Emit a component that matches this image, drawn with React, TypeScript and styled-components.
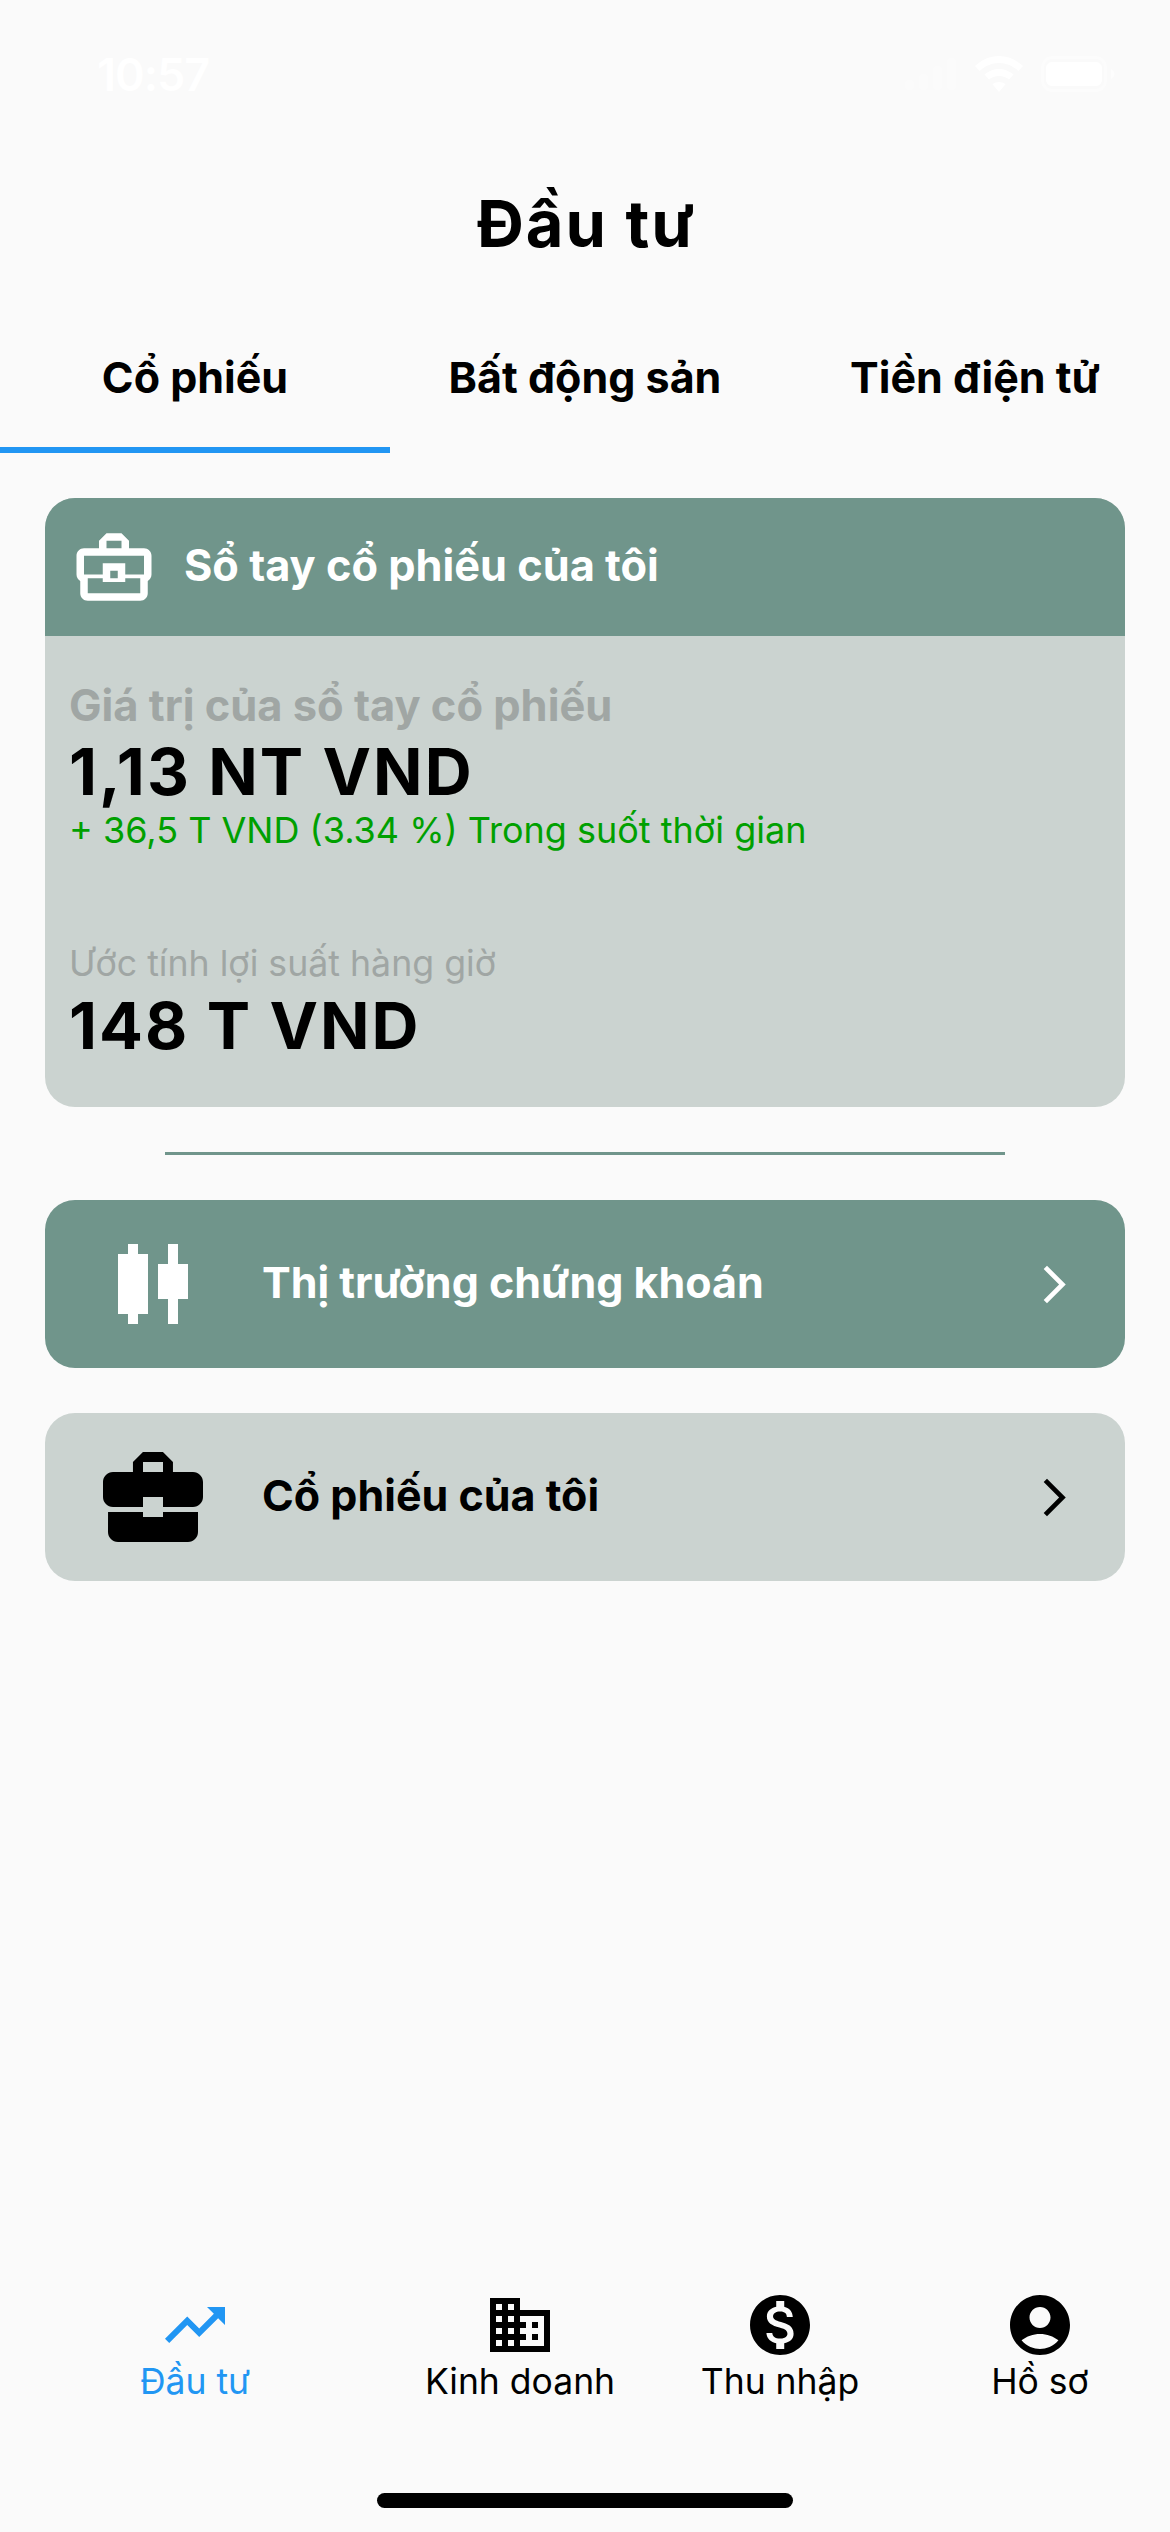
import React from "react";
import styled, { createGlobalStyle } from "styled-components";

const GlobalStyle = createGlobalStyle`
  html, body { margin: 0; padding: 0; background: #fafafa; }
  * { box-sizing: border-box; }
  body { font-family: Inter, "Liberation Sans", sans-serif; color: #000; }
`;

const Page = styled.div`
  position: relative;
  width: 1170px;
  height: 2532px;
  display: flex;
  flex-direction: column;
  background: #fafafa;
  overflow: hidden;
`;

const StatusBar = styled.div`
  height: 188px;
  padding: 48px 55px 0 97px;
  display: flex;
  justify-content: space-between;
  align-items: flex-start;
  color: #fff;
`;

const Clock = styled.span`
  font-size: 45px;
  line-height: 54px;
  font-weight: 600;
  letter-spacing: -1px;
`;

const StatusIcons = styled.div`
  display: flex;
  align-items: flex-end;
  gap: 18px;
  padding-top: 8px;
`;

const Title = styled.h1`
  margin: 0;
  height: 127px;
  padding-left: 3px;
  font-size: 65px;
  line-height: 72px;
  font-weight: 700;
  letter-spacing: 2px;
  text-align: center;
`;

const Tabs = styled.div`
  display: grid;
  grid-template-columns: repeat(3, 390px);
  height: 138px;
`;

const Tab = styled.div<{ $active?: boolean }>`
  padding-top: 32px;
  font-size: 43px;
  line-height: 60px;
  font-weight: 700;
  text-align: center;
  border-bottom: 6px solid ${(p) => (p.$active ? "#2196f3" : "transparent")};
`;

const Content = styled.main`
  padding: 45px 45px 0;
  display: flex;
  flex-direction: column;
`;

const Card = styled.section`
  height: 609px;
  border-radius: 30px;
  background: #cbd3d0;
  overflow: hidden;
`;

const CardHeader = styled.header`
  height: 138px;
  padding-left: 24px;
  display: flex;
  align-items: center;
  gap: 25px;
  background: #70958b;
  color: #fff;
  font-size: 43.300px;
  font-weight: 700;
`;

const HeaderLabel = styled.span`
  margin-bottom: 4px;
`;

const CardBody = styled.div`
  padding: 43px 24px 0;
  display: flex;
  flex-direction: column;
`;

const MutedBold = styled.div`
  font-size: 43.400px;
  line-height: 52px;
  font-weight: 700;
  color: #a0a6a4;
`;

const Amount = styled.div`
  margin: 3px 0 -3px;
  font-size: 65px;
  line-height: 76px;
  font-weight: 700;
  letter-spacing: 2px;
`;

const Gain = styled.div`
  font-size: 36px;
  line-height: 46px;
  color: #00a000;
`;

const MutedPlain = styled.div`
  margin-top: 88px;
  font-size: 35.700px;
  line-height: 44px;
  color: #a0a6a4;
`;

const Divider = styled.hr`
  width: 840px;
  height: 3px;
  margin: 45px auto;
  border: 0;
  background: #70958b;
`;

const LinkRow = styled.div<{ $primary?: boolean }>`
  height: 168px;
  margin-bottom: 45px;
  padding: 0 48px;
  display: flex;
  align-items: center;
  gap: 49px;
  border-radius: 30px;
  background: ${(p) => (p.$primary ? "#70958b" : "#cbd3d0")};
  color: ${(p) => (p.$primary ? "#fff" : "#000")};
  font-size: 43px;
  font-weight: 700;
`;

const LinkText = styled.span`
  flex: 1;
  margin-bottom: 4px;
`;

const BottomNav = styled.nav`
  margin-top: auto;
  display: grid;
  grid-template-columns: 390px repeat(3, 260px);
  padding-bottom: 129px;
`;

const NavItem = styled.div<{ $active?: boolean }>`
  display: flex;
  flex-direction: column;
  align-items: center;
  color: ${(p) => (p.$active ? "#2196f3" : "#000")};
  font-size: 35.500px;
  line-height: 42px;
`;

const HomeIndicator = styled.div`
  position: absolute;
  left: 377px;
  top: 2493px;
  width: 416px;
  height: 15px;
  border-radius: 8px;
  background: #000;
`;

const Icon = ({ d, size }: { d: string; size: number }) => (
  <svg width={size} height={size} viewBox="0 0 24 24" fill="currentColor" style={{ flex: "none" }}>
    <path d={d} />
  </svg>
);

const ICONS = {
  trending:
    "M16 6l2.29 2.29-4.88 4.88-4-4L2 16.59 3.41 18l6-6 4 4 6.3-6.29L22 12V6z",
  business:
    "M12 7V3H2v18h20V7H12zM6 19H4v-2h2v2zm0-4H4v-2h2v2zm0-4H4V9h2v2zm0-4H4V5h2v2zm4 12H8v-2h2v2zm0-4H8v-2h2v2zm0-4H8V9h2v2zm0-4H8V5h2v2zm10 12h-8v-2h2v-2h-2v-2h2v-2h-2V9h8v10zm-2-8h-2v2h2v-2zm0 4h-2v2h2v-2z",
  money:
    "M12 2C6.48 2 2 6.48 2 12s4.48 10 10 10 10-4.48 10-10S17.52 2 12 2zm1.41 16.09V20h-2.67v-1.93c-1.71-.36-3.16-1.46-3.27-3.4h1.96c.1 1.05.82 1.87 2.65 1.87 1.96 0 2.4-.98 2.4-1.59 0-.83-.44-1.61-2.67-2.14-2.48-.6-4.18-1.62-4.18-3.67 0-1.72 1.39-2.84 3.11-3.21V4h2.67v1.95c1.86.45 2.79 1.86 2.85 3.39H14.3c-.05-1.11-.64-1.87-2.22-1.87-1.5 0-2.4.68-2.4 1.64 0 .84.65 1.39 2.67 1.91s4.18 1.39 4.18 3.91c-.01 1.83-1.38 2.83-3.12 3.16z",
  account:
    "M12 2C6.48 2 2 6.48 2 12s4.48 10 10 10 10-4.48 10-10S17.52 2 12 2zm0 4c1.93 0 3.5 1.57 3.5 3.5S13.93 13 12 13s-3.5-1.57-3.5-3.5S10.07 6 12 6zm0 14c-2.03 0-4.43-.82-6.14-2.88C7.55 15.8 9.68 15 12 15s4.45.8 6.14 2.12C16.43 19.18 14.03 20 12 20z",
  briefcase:
    "M10 16v-1H3.01L3 19c0 1.11.89 2 2 2h14c1.11 0 2-.89 2-2v-4h-7v1h-4zm10-9h-4.01V5l-2-2h-4l-2 2v2H4c-1.1 0-2 .9-2 2v3c0 1.11.89 2 2 2h6v-2h4v2h6c1.1 0 2-.9 2-2V9c0-1.1-.9-2-2-2zm-6 0h-4V5h4v2z",
  briefcaseOutline:
    "M20 7h-4V5l-2-2h-4L8 5v2H4c-1.1 0-2 .9-2 2v5c0 .75.4 1.38 1 1.73V19c0 1.11.89 2 2 2h14c1.11 0 2-.89 2-2v-3.28c.59-.35 1-.99 1-1.72V9c0-1.1-.9-2-2-2zM10 5h4v2h-4V5zM4 9h16v5h-5v-3H9v3H4V9zm9 6h-2v-2h2v2zm6 4H5v-4h4v1h6v-1h4v4z",
  candles:
    "M9 4H7v2H5v12h2v2h2v-2h2V6H9V4zm10 4h-2V4h-2v4h-2v7h2v5h2v-5h2V8z",
  chevron: "M6.23 20.23 8 22l10-10L8 2 6.23 3.77 14.46 12z",
};

const Signal = () => (
  <svg width="52" height="36" viewBox="0 0 52 36" fill="#fff" fillOpacity=".18">
    <rect x="0" y="24" width="9" height="10" rx="2" />
    <rect x="14" y="18" width="9" height="16" rx="2" />
    <rect x="28" y="10" width="9" height="24" rx="2" />
    <rect x="42" y="2" width="9" height="32" rx="2" />
  </svg>
);

const Wifi = () => (
  <svg width="48" height="36" viewBox="0 0 48 36" fill="#fff">
    <path d="M24 0C15 0 7 3.500 0 10l4.500 5C10 10 16.500 7 24 7s14 3 19.500 8L48 10C41 3.500 33 0 24 0z" />
    <path d="M24 13c-5.500 0-10.500 2-14.500 5.500l4.500 5c2.800-2.300 6.200-3.500 10-3.500s7.200 1.200 10 3.500l4.500-5C34.500 15 29.500 13 24 13z" />
    <path d="M24 26c-2.500 0-4.700.8-6.500 2.300L24 36l6.500-7.700C28.700 26.800 26.500 26 24 26z" />
  </svg>
);

const Battery = () => (
  <svg width="74" height="36" viewBox="0 0 74 36" fill="none">
    <rect x="1.500" y="1.500" width="63" height="33" rx="10" stroke="#fff" strokeOpacity=".4" strokeWidth="3" />
    <rect x="5" y="6" width="56" height="24" rx="6" fill="#fff" />
    <path d="M70 13c2 .6 3.500 2.800 3.500 5s-1.500 4.400-3.500 5z" fill="#fff" fillOpacity=".5" />
  </svg>
);

export default function App() {
  return (
    <Page>
      <GlobalStyle />
      <StatusBar>
        <Clock>10:57</Clock>
        <StatusIcons>
          <Signal />
          <Wifi />
          <Battery />
        </StatusIcons>
      </StatusBar>
      <Title>Đầu tư</Title>
      <Tabs>
        <Tab $active>Cổ phiếu</Tab>
        <Tab>Bất động sản</Tab>
        <Tab>Tiền điện tử</Tab>
      </Tabs>
      <Content>
        <Card>
          <CardHeader>
            <Icon d={ICONS.briefcaseOutline} size={90} />
            <HeaderLabel>Sổ tay cổ phiếu của tôi</HeaderLabel>
          </CardHeader>
          <CardBody>
            <MutedBold>Giá trị của sổ tay cổ phiếu</MutedBold>
            <Amount>1,13 NT VND</Amount>
            <Gain>+ 36,5 T VND (3.34 %) Trong suốt thời gian</Gain>
            <MutedPlain>Ước tính lợi suất hàng giờ</MutedPlain>
            <Amount>148 T VND</Amount>
          </CardBody>
        </Card>
        <Divider />
        <LinkRow $primary>
          <Icon d={ICONS.candles} size={120} />
          <LinkText>Thị trường chứng khoán</LinkText>
          <Icon d={ICONS.chevron} size={45} />
        </LinkRow>
        <LinkRow>
          <Icon d={ICONS.briefcase} size={120} />
          <LinkText>Cổ phiếu của tôi</LinkText>
          <Icon d={ICONS.chevron} size={45} />
        </LinkRow>
      </Content>
      <BottomNav>
        <NavItem $active>
          <Icon d={ICONS.trending} size={72} />
          Đầu tư
        </NavItem>
        <NavItem>
          <Icon d={ICONS.business} size={72} />
          Kinh doanh
        </NavItem>
        <NavItem>
          <Icon d={ICONS.money} size={72} />
          Thu nhập
        </NavItem>
        <NavItem>
          <Icon d={ICONS.account} size={72} />
          Hồ sơ
        </NavItem>
      </BottomNav>
      <HomeIndicator />
    </Page>
  );
}
